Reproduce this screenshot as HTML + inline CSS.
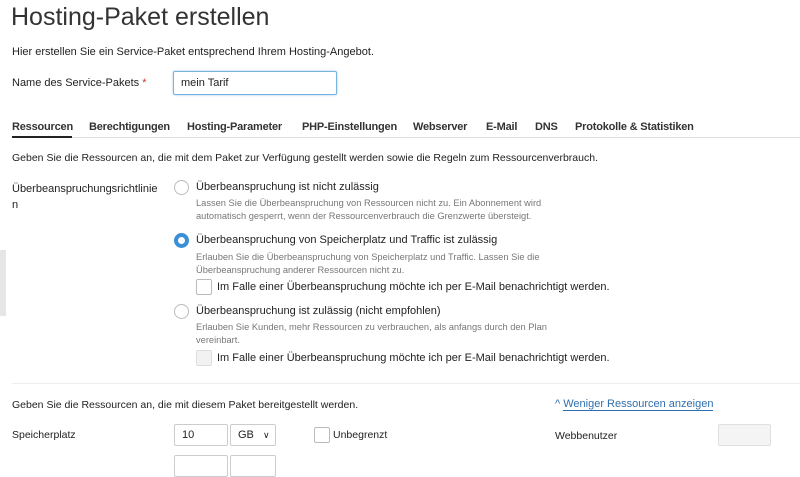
<!DOCTYPE html>
<html><head><meta charset="utf-8"><style>
body{margin:0;width:800px;height:457px;overflow:hidden;background:#fff;font-family:"Liberation Sans",sans-serif;color:#222;position:relative}
.a{position:absolute;white-space:nowrap}
.s{font-size:11px}
.d{font-size:9.3px;color:#777}
.t{font-size:11px;font-weight:bold;color:#333;letter-spacing:-0.2px}
.r{position:absolute;width:13px;height:13px;border:1px solid #bbb;border-radius:50%;background:#fff}
.cb{position:absolute;width:14px;height:14px;border:1px solid #bbb;border-radius:2px;background:#fff}
.inp{position:absolute;border:1px solid #ccc;border-radius:2px;background:#fff;box-sizing:border-box;font-size:11px;padding-left:7px;line-height:20px}
</style></head><body>
<div class="a" style="left:11px;top:3px;font-size:25px;color:#333">Hosting-Paket erstellen</div>
<div class="a s" style="left:12px;top:46px">Hier erstellen Sie ein Service-Paket entsprechend Ihrem Hosting-Angebot.</div>
<div class="a s" style="left:12px;top:77px">Name des Service-Pakets <span style="color:#c33">*</span></div>
<div class="inp" style="left:173px;top:71px;width:164px;height:24px;border-color:#7ab3e0;box-shadow:0 0 2px #9cc8ec;line-height:22px">mein Tarif</div>
<div class="a t" style="left:12px;top:121px">Ressourcen</div>
<div class="a t" style="left:89px;top:121px">Berechtigungen</div>
<div class="a t" style="left:187px;top:121px">Hosting-Parameter</div>
<div class="a t" style="left:302px;top:121px">PHP-Einstellungen</div>
<div class="a t" style="left:413px;top:121px">Webserver</div>
<div class="a t" style="left:486px;top:121px">E-Mail</div>
<div class="a t" style="left:535px;top:121px">DNS</div>
<div class="a t" style="left:575px;top:121px">Protokolle &amp; Statistiken</div>
<div class="a" style="left:12px;top:137px;width:788px;height:1px;background:#ddd"></div>
<div class="a" style="left:12px;top:136px;width:60px;height:2px;background:#222"></div>
<div class="a s" style="left:12px;top:152px;font-size:10.5px">Geben Sie die Ressourcen an, die mit dem Paket zur Verfügung gestellt werden sowie die Regeln zum Ressourcenverbrauch.</div>
<div class="a s" style="left:12px;top:181px;line-height:16px">Überbeanspruchungsrichtlinie<br>n</div>
<div class="r" style="left:174px;top:180px"></div>
<div class="a s" style="left:196px;top:181px">Überbeanspruchung ist nicht zulässig</div>
<div class="a d" style="left:196px;top:197px;line-height:13px">Lassen Sie die Überbeanspruchung von Ressourcen nicht zu. Ein Abonnement wird<br>automatisch gesperrt, wenn der Ressourcenverbrauch die Grenzwerte übersteigt.</div>
<div class="r" style="left:174px;top:233px;border:4px solid #3b8fd6;width:7px;height:7px"></div>
<div class="a s" style="left:196px;top:234px">Überbeanspruchung von Speicherplatz und Traffic ist zulässig</div>
<div class="a d" style="left:196px;top:251px;line-height:13px">Erlauben Sie die Überbeanspruchung von Speicherplatz und Traffic. Lassen Sie die<br>Überbeanspruchung anderer Ressourcen nicht zu.</div>
<div class="cb" style="left:196px;top:279px"></div>
<div class="a s" style="left:217px;top:281px">Im Falle einer Überbeanspruchung möchte ich per E-Mail benachrichtigt werden.</div>
<div class="r" style="left:174px;top:304px"></div>
<div class="a s" style="left:196px;top:305px">Überbeanspruchung ist zulässig (nicht empfohlen)</div>
<div class="a d" style="left:196px;top:321px;line-height:13px">Erlauben Sie Kunden, mehr Ressourcen zu verbrauchen, als anfangs durch den Plan<br>vereinbart.</div>
<div class="cb" style="left:196px;top:350px;background:#f2f2f2;border-color:#ddd"></div>
<div class="a s" style="left:217px;top:352px">Im Falle einer Überbeanspruchung möchte ich per E-Mail benachrichtigt werden.</div>
<div class="a" style="left:0;top:250px;width:6px;height:66px;background:#e6e6e6"></div>
<div class="a" style="left:12px;top:383px;width:788px;height:1px;background:#eee"></div>
<div class="a s" style="left:12px;top:399px;font-size:10.5px">Geben Sie die Ressourcen an, die mit diesem Paket bereitgestellt werden.</div>
<div class="a s" style="left:555px;top:398px;color:#2f6fad;font-size:11px">^ <span style="border-bottom:1px solid #2f6fad">Weniger Ressourcen anzeigen</span></div>
<div class="a s" style="left:12px;top:429px;font-size:10.5px">Speicherplatz</div>
<div class="inp" style="left:174px;top:424px;width:54px;height:22px">10</div>
<div class="inp" style="left:230px;top:424px;width:46px;height:22px">GB <span style="font-size:9px;margin-left:6px">&#8744;</span></div>
<div class="cb" style="left:314px;top:427px"></div>
<div class="a s" style="left:333px;top:429px;font-size:10.5px">Unbegrenzt</div>
<div class="a s" style="left:555px;top:430px;font-size:10.5px">Webbenutzer</div>
<div class="inp" style="left:718px;top:424px;width:53px;height:22px;background:#f4f4f4;border-color:#e0e0e0"></div>
<div class="inp" style="left:174px;top:455px;width:54px;height:22px"></div>
<div class="inp" style="left:230px;top:455px;width:46px;height:22px"></div>
</body></html>
